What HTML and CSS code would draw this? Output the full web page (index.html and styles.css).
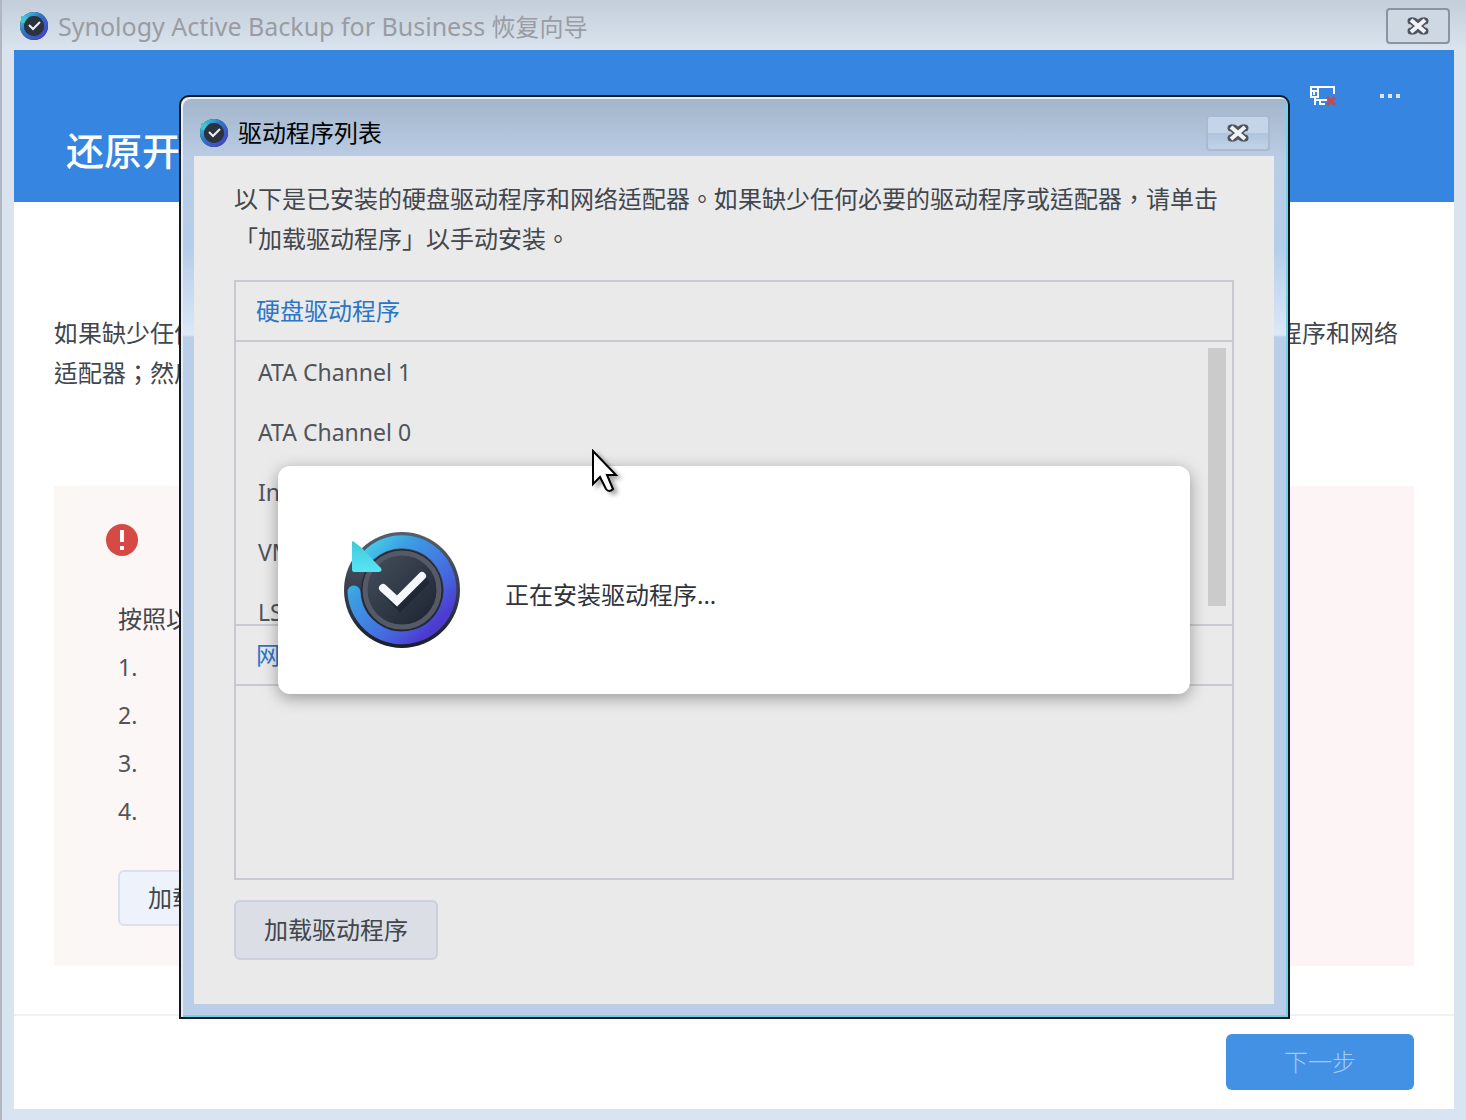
FILE: index.html
```html
<!DOCTYPE html>
<html lang="zh-Hant">
<head>
<meta charset="utf-8">
<meta name="viewport" content="width=device-width, initial-scale=1">
<title>Synology Active Backup for Business 恢复向导</title>
<link rel="stylesheet" href="styles.css">
</head>
<body>
<svg class="defs" width="0" height="0" aria-hidden="true">
  <defs>
    <linearGradient id="ring" gradientUnits="userSpaceOnUse" x1="14" y1="26" x2="88" y2="100">
      <stop offset="0" stop-color="#48cdea"/>
      <stop offset="0.25" stop-color="#3b9fe2"/>
      <stop offset="0.6" stop-color="#4379e2"/>
      <stop offset="0.8" stop-color="#4660dc"/>
      <stop offset="1" stop-color="#4d3bd0"/>
    </linearGradient>
    <linearGradient id="tip" x1="0" y1="0" x2="0" y2="1">
      <stop offset="0" stop-color="#40c9d8"/>
      <stop offset="1" stop-color="#57e6f6"/>
    </linearGradient>
    <linearGradient id="disc" x1="0" y1="0" x2="0" y2="1">
      <stop offset="0" stop-color="#55606d"/>
      <stop offset="1" stop-color="#191d2c"/>
    </linearGradient>
    <linearGradient id="face" x1="0" y1="0" x2="1" y2="1">
      <stop offset="0" stop-color="#46505c"/>
      <stop offset="1" stop-color="#1b2230"/>
    </linearGradient>
    <linearGradient id="ring-small" x1="0" y1="0" x2="1" y2="1">
      <stop offset="0" stop-color="#3fd0dc"/>
      <stop offset="0.4" stop-color="#2f78c4"/>
      <stop offset="1" stop-color="#4a3cc4"/>
    </linearGradient>
    <symbol id="app" viewBox="0 0 120 120">
      <circle cx="60" cy="60" r="58" fill="url(#disc)"/>
      <path d="M28 24A48 48 0 1 1 12 62" fill="none" stroke="url(#ring)" stroke-width="13" stroke-linecap="round"/>
      <circle cx="60" cy="60" r="41" fill="#222a36"/>
      <circle cx="60" cy="60" r="37" fill="url(#face)" stroke="#555a66" stroke-width="5"/>
      <path d="M11 11 20 18 32 31 39 38Q41 42 36 42H12Q10 42 10 39V12Z" fill="url(#tip)"/>
      <path d="M43 59 55 72 80 47" transform="translate(3 5)" fill="none" stroke="#121722" stroke-opacity=".4" stroke-width="8" stroke-linecap="round"/>
      <path d="M41 58 55 71 80 46" fill="none" stroke="#f4f7fb" stroke-width="8" stroke-linecap="round"/>
    </symbol>
    <symbol id="app-small" viewBox="0 0 30 30">
      <circle cx="15" cy="15" r="14" fill="#26304a"/>
      <circle cx="15" cy="15" r="12" fill="none" stroke="url(#ring-small)" stroke-width="4"/>
      <path d="M2 5 7 5 11 9 9 12 2 12Z" fill="#3fc4d4"/>
      <circle cx="15" cy="15" r="10" fill="#2b3340"/>
      <path d="M10 14 14 18 21 11" fill="none" stroke="#eef2f8" stroke-width="2"/>
    </symbol>
    <symbol id="close" viewBox="0 0 24 20">
      <path d="M5 5H8L12 8 16 5H19M5 15H8L12 12 16 15H19M6 5 18 15M18 5 6 15" fill="none" stroke="#4f545e" stroke-width="7" stroke-linejoin="round" stroke-linecap="round"/>
      <path d="M5 4 19 16M19 4 5 16" fill="none" stroke="#f1f3f5" stroke-width="4"/>
    </symbol>
  </defs>
</svg>

<div class="window">
  <header class="titlebar">
    <svg class="titlebar-icon" aria-hidden="true"><use href="#app-small"/></svg>
    <h1 class="titlebar-text titlebar-text-muted"><span class="product">Synology Active Backup for Business</span> 恢复向导</h1>
    <button class="close" type="button" aria-label="关闭"><svg class="close-icon"><use href="#close"/></svg></button>
  </header>

  <div class="client">
    <div class="banner">
      <h2 class="banner-title">还原开始</h2>
      <div class="banner-tools">
        <button class="tool" type="button" aria-label="网络">
          <svg width="28" height="24" viewBox="0 0 28 24" fill="none" stroke="#fff" stroke-width="2">
            <path d="M2 3H9V13H2ZM2 7H9M5 7V11M9 3H25V10M6 13V21M6 16H10M18 16H11V20H16"/>
            <path d="M18 13 26 21M26 13 18 21" stroke="#c9484e" stroke-width="3"/>
          </svg>
        </button>
        <button class="tool" type="button" aria-label="更多">
          <svg width="20" height="4" viewBox="0 0 20 4" fill="#d9e8fa"><path d="M0 0H4V4H0ZM8 0H12V4H8ZM16 0H20V4H16Z"/></svg>
        </button>
      </div>
    </div>

    <main class="content">
      <p class="intro">如果缺少任何必要的驱动程序或适配器，请单击「加载驱动程序」以手动安装。请先确认已安装所有必要的硬盘驱动程序和网络适配器；然后继续。</p>
      <section class="alert">
        <svg class="alert-icon" viewBox="0 0 32 32" aria-hidden="true"><circle cx="16" cy="16" r="16" fill="#d64a45"/><path d="M14 6H18V18H14ZM14 22H18V26H14Z" fill="#fff"/></svg>
        <div class="alert-body">
          <p class="alert-line">按照以下步骤操作：</p>
          <div class="alert-line alert-step">1.</div>
          <div class="alert-line alert-step">2.</div>
          <div class="alert-line alert-step">3.</div>
          <div class="alert-line alert-step">4.</div>
          <button class="button button-light" type="button">加载驱动程序</button>
        </div>
      </section>
    </main>

    <footer class="footer">
      <button class="button-primary" type="button">下一步</button>
    </footer>

    <div class="dialog" role="dialog" aria-labelledby="dialog-title">
      <header class="titlebar titlebar-dialog">
        <svg class="titlebar-icon" aria-hidden="true"><use href="#app-small"/></svg>
        <h2 class="titlebar-text" id="dialog-title">驱动程序列表</h2>
        <button class="close close-active" type="button" aria-label="关闭"><svg class="close-icon"><use href="#close"/></svg></button>
      </header>
      <div class="dialog-body">
        <p class="dialog-text">以下是已安装的硬盘驱动程序和网络适配器。如果缺少任何必要的驱动程序或适配器，请单击「加载驱动程序」以手动安装。</p>
        <div class="drivers">
          <h3 class="group">硬盘驱动程序</h3>
          <div class="scroller">
            <ul class="rows">
              <li class="row">ATA Channel 1</li>
              <li class="row">ATA Channel 0</li>
              <li class="row">Intel</li>
              <li class="row">VMware</li>
              <li class="row">LSI</li>
            </ul>
            <div class="scrollbar"></div>
          </div>
          <h3 class="group group-next">网络适配器</h3>
        </div>
        <button class="button" type="button">加载驱动程序</button>
      </div>

      <div class="progress" role="status">
        <svg class="progress-icon" aria-hidden="true"><use href="#app"/></svg>
        <p class="progress-text">正在安装驱动程序...</p>
      </div>

      <svg class="cursor" viewBox="0 0 28 44" aria-hidden="true">
        <path d="M2 2V35L9 28 15 40Q18 44 22 40L16 26H25Z" fill="#fff" stroke="#000" stroke-width="2"/>
      </svg>
    </div>
  </div>
</div>
</body>
</html>
```
FILE: styles.css
```css
* {
  box-sizing: border-box;
}

body,
h1,
h2,
h3,
p,
ul {
  margin: 0;
  padding: 0;
}

body {
  font: 24px/40px "Noto Sans", "Noto Sans CJK TC", sans-serif;
  color: #42464d;
  text-spacing-trim: space-all;
}

button {
  font: inherit;
  color: inherit;
  padding: 0;
}

.defs {
  position: absolute;
}

.window {
  display: flex;
  flex-direction: column;
  min-height: 100vh;
  padding: 0 12px 11px;
  border-left: 2px solid #b1b6c2;
  background: linear-gradient(#c3ceda, #dae4ef 50px, #d8e4f1);
}

.titlebar {
  display: flex;
  align-items: center;
  height: 50px;
  padding: 2px 4px 0 5px;
}

.titlebar-icon {
  flex: none;
  width: 30px;
  height: 30px;
  margin-right: 9px;
}

.titlebar-text {
  flex: 1;
  font-size: 24px;
  font-weight: 400;
  color: #000;
  white-space: nowrap;
}

.titlebar-text-muted {
  color: #999da3;
}

.product {
  font-size: 25px;
}

.close {
  display: flex;
  align-items: center;
  justify-content: center;
  width: 64px;
  height: 36px;
  border: 2px solid #8c929f;
  border-radius: 4px;
  background: #ced8e3;
}

.close-active {
  border-color: #a9bad0;
  background: linear-gradient(#c5d5e9 50%, #aec4dd 50%, #c0d3e8);
}

.close-icon {
  width: 24px;
  height: 20px;
}

.client {
  position: relative;
  flex: 1;
  display: flex;
  flex-direction: column;
  background: #fff;
}

.banner {
  display: flex;
  justify-content: space-between;
  height: 152px;
  padding: 0 54px 0 52px;
  background: #3685e1;
  color: #fff;
}

.banner-title {
  align-self: flex-end;
  padding-bottom: 32px;
  font-size: 38px;
  font-weight: 500;
}

.banner-tools {
  display: flex;
  gap: 43px;
  padding-top: 34px;
}

.tool {
  display: flex;
  align-items: center;
  height: 24px;
  border: 0;
  background: none;
}

.content {
  flex: 1;
  padding: 111px 40px 48px;
}

.intro {
  margin-bottom: 93px;
}

.alert {
  padding: 38px 52px 40px;
  background: linear-gradient(90deg, #fbf7f5, #fdf5f5 80%);
}

.alert-icon {
  display: block;
  width: 32px;
  height: 32px;
  margin-bottom: 39px;
}

.alert-body {
  padding-left: 12px;
}

.alert-line {
  line-height: 48px;
}

.alert-step,
.row {
  font-size: 23px;
  color: #50545c;
}

.button {
  height: 60px;
  padding: 0 28px;
  border: 2px solid #cbd0dd;
  border-radius: 6px;
  background: #dbdee4;
}

.button-light {
  height: 56px;
  margin-top: 35px;
  border-color: #d9e0ee;
  background: #eef2fa;
}

.footer {
  display: flex;
  justify-content: flex-end;
  padding: 18px 40px 19px;
  border-top: 2px solid #f0f1f3;
}

.button-primary {
  width: 188px;
  height: 56px;
  border: 0;
  border-radius: 6px;
  background: #4391e4;
  color: #a3cbf3;
  font-weight: 300;
}

.dialog {
  position: absolute;
  top: 45px;
  left: 165px;
  right: 164px;
  padding: 0 14px 13px 13px;
  border: 2px solid #111820;
  border-radius: 10px 10px 0 0;
  background: linear-gradient(#a2b5cb, #b9cce3 60px, #b5cdea 150px, #dbe8f7 238px, #bacee8 240px);
  box-shadow: inset 2px 2px #e5eef7, inset -2px -2px #6fd3ea;
}

.titlebar-dialog {
  height: 59px;
  padding: 12px 4px 0 5px;
}

.dialog-body {
  min-height: 848px;
  padding: 23px 40px 44px;
  background: #eaeaea;
}

.dialog-text {
  margin-bottom: 21px;
}

.drivers {
  height: 600px;
  margin-bottom: 20px;
  border: 2px solid #c7cad0;
}

.group {
  height: 60px;
  padding: 0 20px;
  border-bottom: 2px solid #c7cad0;
  font-size: 24px;
  font-weight: 400;
  line-height: 58px;
  color: #2a76c8;
}

.group-next {
  height: 62px;
  border-top: 2px solid #c7cad0;
}

.scroller {
  display: flex;
  justify-content: space-between;
  height: 282px;
  padding-right: 6px;
  overflow: hidden;
}

.rows {
  list-style: none;
}

.row {
  padding-left: 22px;
  line-height: 60px;
}

.scrollbar {
  width: 18px;
  height: 258px;
  margin-top: 6px;
  background: #cbcbcb;
}

.progress {
  position: absolute;
  top: 369px;
  left: 97px;
  right: 98px;
  display: flex;
  align-items: center;
  gap: 43px;
  height: 228px;
  padding: 20px 64px 0;
  border-radius: 12px;
  background: #fff;
  color: #2f343c;
  box-shadow: 0 4px 16px rgba(0, 0, 0, 0.35);
}

.progress-icon {
  flex: none;
  width: 120px;
  height: 120px;
}

.progress-text {
  padding-top: 10px;
}

.cursor {
  position: absolute;
  top: 352px;
  left: 410px;
  width: 28px;
  height: 44px;
  filter: drop-shadow(4px 3px 2px rgba(0, 0, 0, 0.35));
}
```
